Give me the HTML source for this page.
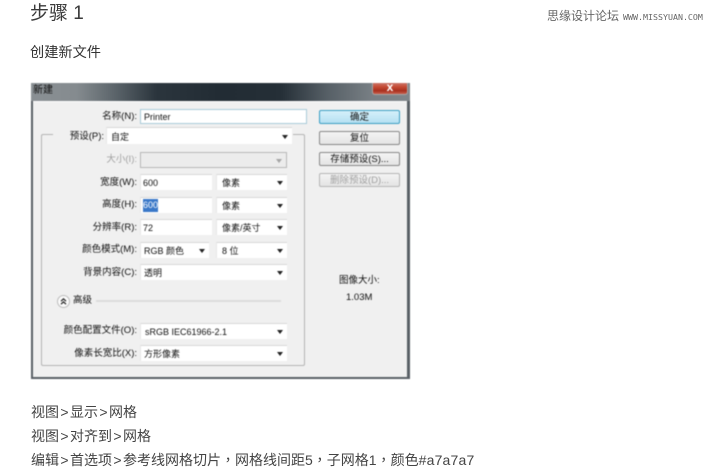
<!DOCTYPE html>
<html lang="zh">
<head>
<meta charset="utf-8">
<style>
html,body{margin:0;padding:0;background:#fff}
body{width:720px;height:474px;overflow:hidden;position:relative;font-family:"Liberation Sans","Noto Sans CJK SC",sans-serif;color:#333}
.t{position:absolute;white-space:nowrap}
.w{position:absolute;left:0;top:0;width:720px;height:474px}
#e{filter:blur(.4px)}
#d{position:absolute;left:31px;top:83px;width:379px;height:296px;background:#596066}
#tb{position:absolute;left:0;top:0;width:379px;height:18px;background:linear-gradient(90deg,#8a9094 0,#858b8f 12%,#5c656b 22%,#2b353d 33%,#222c34 50%,#252f37 66%,#565f66 78%,#787f84 90%,#80868a 100%)}
#c{position:absolute;left:2px;top:18px;width:374px;height:276px;background:#f0f0f0;border-top:1px solid #fff;box-sizing:border-box}
#x{position:absolute;left:341px;top:0;width:36px;height:12px;background:linear-gradient(#c9756a 0,#c64a33 35%,#a8301f 70%,#c8604d 100%);border:1px solid #a5a5a5;border-top:0;border-radius:0 0 3px 3px;box-sizing:border-box;color:#fff;font:bold 12px/8px "Liberation Sans",sans-serif;text-align:center}
.l{position:absolute;font-size:9.5px;line-height:14px;color:#111;text-align:right;white-space:nowrap}
.f{position:absolute;background:#fff;box-sizing:border-box;border-top:1px solid #d8d8d8;border-left:1px solid #e8e8e8;font-size:9px;line-height:16px;color:#111;padding-left:3px;white-space:nowrap}
.f i{position:absolute;right:4px;top:6px;width:0;height:0;border:3px solid transparent;border-top:4px solid #222;border-bottom:0}
.b{position:absolute;left:319px;width:81px;height:14px;box-sizing:border-box;border:1px solid #888;border-radius:2px;background:linear-gradient(#f4f4f4,#e4e4e4);font-size:9.5px;line-height:13px;text-align:center;color:#111;white-space:nowrap}
.g{display:inline-block;width:11px;text-align:center}
.c{font-family:"Noto Sans CJK TC",sans-serif}
</style>
</head>
<body>
<div class="w">
<div class="t" style="left:30px;top:1px;font-size:19px;line-height:26px;color:#3a3a3a">步骤 1</div>
<div class="t" style="left:547px;top:9px;font-size:12px;line-height:14px;color:#666">思缘设计论坛</div>
<div class="t" style="left:623px;top:12px;font:8.3px/10px 'DejaVu Sans Mono','Liberation Mono',monospace;color:#666">WWW.MISSYUAN.COM</div>
<div class="t" style="left:30px;top:44px;font-size:14.2px;line-height:18px;color:#333">创建新文件</div>
<div class="t" style="left:31px;top:403px;font-size:14px;line-height:18px;color:#444">视图<span class="g">&gt;</span>显示<span class="g">&gt;</span>网格</div>
<div class="t" style="left:31px;top:427px;font-size:14px;line-height:18px;color:#444">视图<span class="g">&gt;</span>对齐到<span class="g">&gt;</span>网格</div>
<div class="t" style="left:31px;top:451px;font-size:14px;line-height:18px;color:#444">编辑<span class="g">&gt;</span>首选项<span class="g">&gt;</span>参考线网格切片<span class="c" lang="zh-TW">，</span>网格线间距5<span class="c" lang="zh-TW">，</span>子网格1<span class="c" lang="zh-TW">，</span>颜色<span style="letter-spacing:.2px">#a7a7a7</span></div>
</div>

<div class="w" id="e">
<div id="d">
<div id="tb"><span class="t" style="left:2px;top:1px;font-size:10px;line-height:14px;color:#111">新建</span></div>
<div id="c"></div>
<div id="x">x</div>
</div>

<div style="position:absolute;left:41px;top:134px;width:264px;height:232px;box-sizing:border-box;border:1px solid #b4b4b4;border-radius:2px"></div>
<div style="position:absolute;left:53px;top:130px;width:240px;height:10px;background:#f0f0f0"></div>

<div class="l" style="right:583px;top:110px">名称(N):</div>
<div class="f" style="left:140px;top:109px;width:167px;height:15px;border:1px solid #a9cbd9;line-height:14px">Printer</div>

<div class="l" style="right:616px;top:130px">预设(P):</div>
<div class="f" style="left:106px;top:127px;width:186px;height:17px;padding-left:4px;line-height:18px">自定<i style="top:7px"></i></div>

<div class="l" style="right:583px;top:153px;color:#a2a2a2">大小(I):</div>
<div class="f" style="left:140px;top:152px;width:147px;height:16px;background:#ececec;border:1px solid #b8b8b8"><i style="border-top-color:#a5a5a5"></i></div>

<div class="l" style="right:583px;top:176px">宽度(W):</div>
<div class="f" style="left:140px;top:174px;width:72px;height:16px;padding-left:2px">600</div>
<div class="f" style="left:216px;top:174px;width:71px;height:16px;padding-left:5px">像素<i></i></div>

<div class="l" style="right:583px;top:198px">高度(H):</div>
<div class="f" style="left:140px;top:197px;width:72px;height:16px;padding-left:2px"><span style="background:#3a78c8;color:#fff;display:inline-block;line-height:13px;height:13px;vertical-align:top;margin-top:1px">600</span></div>
<div class="f" style="left:216px;top:197px;width:71px;height:16px;padding-left:5px">像素<i></i></div>

<div class="l" style="right:583px;top:221px">分辨率(R):</div>
<div class="f" style="left:140px;top:219px;width:72px;height:16px;padding-left:2px">72</div>
<div class="f" style="left:216px;top:219px;width:71px;height:16px;padding-left:5px">像素/英寸<i></i></div>

<div class="l" style="right:583px;top:243px">颜色模式(M):</div>
<div class="f" style="left:140px;top:242px;width:69px;height:16px">RGB 颜色<i></i></div>
<div class="f" style="left:216px;top:242px;width:71px;height:16px;padding-left:5px">8 位<i></i></div>

<div class="l" style="right:583px;top:266px">背景内容(C):</div>
<div class="f" style="left:140px;top:264px;width:147px;height:16px">透明<i></i></div>

<svg style="position:absolute;left:57px;top:295px" width="13" height="13" viewBox="0 0 13 13"><circle cx="6.5" cy="6.5" r="6" fill="#fbfbfb" stroke="#bdbdbd"/><path d="M4 6.2 6.5 3.8 9 6.2M4 9.2 6.5 6.8 9 9.2" fill="none" stroke="#222" stroke-width="1.2"/></svg>
<div class="l" style="left:73px;top:294px">高级</div>
<div style="position:absolute;left:96px;top:300px;width:185px;height:2px;background:#dcdcdc"></div>

<div class="l" style="right:583px;top:324px">颜色配置文件(O):</div>
<div class="f" style="left:140px;top:323px;width:147px;height:16px;padding-left:4px">sRGB IEC61966-2.1<i></i></div>

<div class="l" style="right:583px;top:347px">像素长宽比(X):</div>
<div class="f" style="left:140px;top:345px;width:147px;height:16px">方形像素<i></i></div>

<div class="b" style="top:110px;border:1px solid #3b9fc4;background:linear-gradient(#d5f0fa,#b5e0f2)">确定</div>
<div class="b" style="top:131px">复位</div>
<div class="b" style="top:152px">存储预设(S)...</div>
<div class="b" style="top:173px;color:#a0a0a0;border-color:#b5b5b5">删除预设(D)...</div>

<div class="t" style="left:339px;top:274px;font-size:9.5px;line-height:14px;color:#111">图像大小:</div>
<div class="t" style="left:346px;top:291px;font-size:9.5px;line-height:14px;color:#111">1.03M</div>
</div>
</body>
</html>
